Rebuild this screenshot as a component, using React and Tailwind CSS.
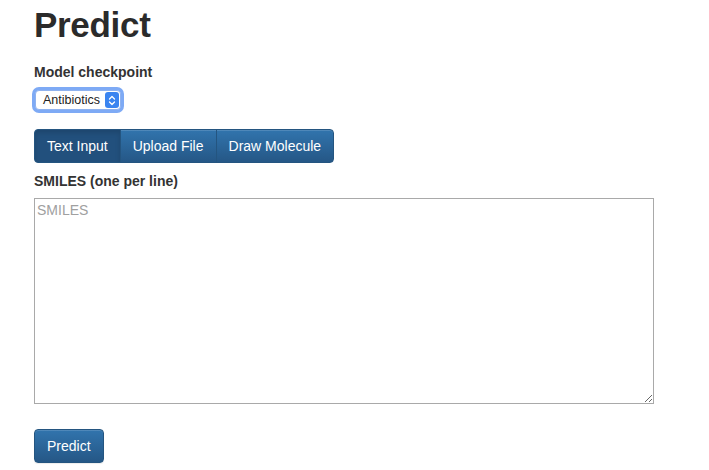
import { useState } from "react";

const tabs = ["Text Input", "Upload File", "Draw Molecule"];

function Tab({ label, active, first, last, onClick }) {
  return (
    <button
      type="button"
      onClick={onClick}
      className={`h-[34px] px-[12px] border border-[#245580] text-[14px] text-white leading-[20px] ${
        first ? "rounded-l-[4px]" : "-ml-px"
      } ${last ? "rounded-r-[4px]" : ""} ${
        active
          ? "bg-[#22507d] shadow-[inset_0_3px_5px_rgba(0,0,0,0.125)]"
          : "bg-gradient-to-b from-[#3174ad] to-[#255786] shadow-[inset_0_1px_0_rgba(255,255,255,0.15)]"
      }`}
    >
      {label}
    </button>
  );
}

export default function App() {
  const [tab, setTab] = useState(0);

  return (
    <div className="min-h-[470px] bg-white px-[34px] font-['Liberation_Sans',Arial,sans-serif] text-[14px] text-[#333]">
      <h1 className="mt-[5px] text-[35px] font-bold leading-[40px] tracking-[-0.3px] text-[#2b2b2b]">
        Predict
      </h1>

      <div className="mt-[17px] text-[14px] font-bold leading-[20px]">
        Model checkpoint
      </div>

      <div className="mt-[8px] ml-px flex h-[20px] w-[86px] items-center justify-between rounded-[4px] border border-[#8fb2ef] bg-white pl-[7px] pr-px ring-[3px] ring-[#7eaaf5]">
        <span className="text-[12.5px] leading-none text-[#222]">Antibiotics</span>
        <span className="flex h-[16px] w-[14px] items-center justify-center rounded-[3px] bg-[#3a84f0]">
          <svg width="8" height="11" viewBox="0 0 8 11" fill="none">
            <path d="M1.5 4 L4 1.5 L6.5 4" stroke="white" strokeWidth="1.3" strokeLinecap="round" strokeLinejoin="round" />
            <path d="M1.5 7 L4 9.5 L6.5 7" stroke="white" strokeWidth="1.3" strokeLinecap="round" strokeLinejoin="round" />
          </svg>
        </span>
      </div>

      <div className="mt-[19px] flex">
        {tabs.map((t, i) => (
          <Tab
            key={t}
            label={t}
            active={tab === i}
            first={i === 0}
            last={i === tabs.length - 1}
            onClick={() => setTab(i)}
          />
        ))}
      </div>

      <div className="mt-[8px] text-[14px] font-bold leading-[20px]">
        SMILES (one per line)
      </div>

      <textarea
        placeholder="SMILES"
        className="mt-[7px] block h-[206px] w-[620px] border border-[#a9a9a9] px-[2px] py-[2px] text-[14px] leading-[18px] text-[#333] placeholder:text-[#a0a0a0] outline-none"
      />

      <button
        type="button"
        className="mt-[25px] h-[34px] rounded-[4px] border border-[#245580] bg-gradient-to-b from-[#3174ad] to-[#255786] px-[12px] text-[14px] leading-[20px] text-white shadow-[inset_0_1px_0_rgba(255,255,255,0.15),0_1px_1px_rgba(0,0,0,0.075)]"
      >
        Predict
      </button>
    </div>
  );
}
